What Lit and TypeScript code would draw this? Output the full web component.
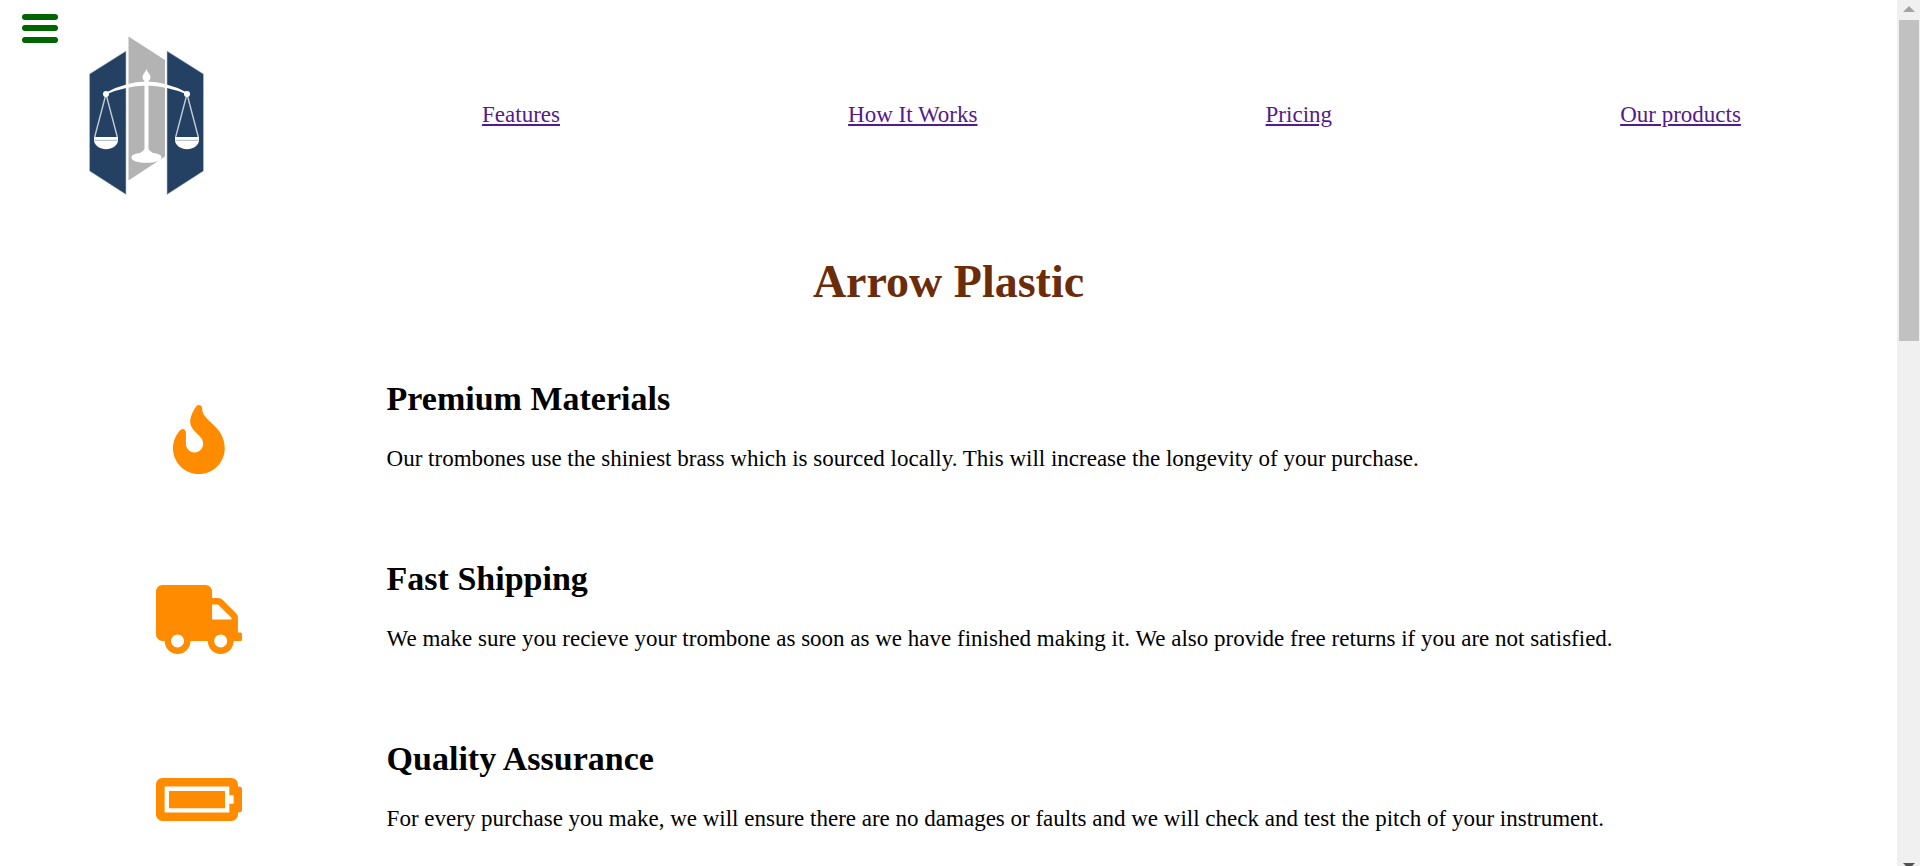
import { LitElement, html, css, svg } from "lit";
import { customElement } from "lit/decorators.js";

interface Feature {
  title: string;
  text: string;
  viewBox: string;
  path: string;
}

const LINKS = [
  { label: "Features", href: "#features" },
  { label: "How It Works", href: "#how-it-works" },
  { label: "Pricing", href: "#pricing" },
  { label: "Our products", href: "#products" },
];

const FEATURES: Feature[] = [
  {
    title: "Premium Materials",
    text: "Our trombones use the shiniest brass which is sourced locally. This will increase the longevity of your purchase.",
    viewBox: "0 0 384 512",
    path: "M216 23.86c0-23.8-30.65-32.77-44.15-13.04C48 191.85 224 200 224 288c0 35.63-29.11 64.46-64.85 63.99-35.17-.45-63.15-29.77-63.15-64.94v-85.51c0-21.7-26.47-32.23-41.43-16.5C27.8 213.16 0 261.33 0 320c0 105.87 86.13 192 192 192s192-86.13 192-192c0-170.29-168-193-168-296.14z",
  },
  {
    title: "Fast Shipping",
    text: "We make sure you recieve your trombone as soon as we have finished making it. We also provide free returns if you are not satisfied.",
    viewBox: "0 0 640 512",
    path: "M624 352h-16V243.9c0-12.7-5.1-24.9-14.1-33.9L494 110.1c-9-9-21.2-14.1-33.9-14.1H416V48c0-26.5-21.5-48-48-48H48C21.5 0 0 21.5 0 48v320c0 26.5 21.5 48 48 48h16c0 53 43 96 96 96s96-43 96-96h128c0 53 43 96 96 96s96-43 96-96h48c8.8 0 16-7.2 16-16v-32c0-8.8-7.2-16-16-16zM160 464c-26.5 0-48-21.5-48-48s21.5-48 48-48 48 21.5 48 48-21.5 48-48 48zm320 0c-26.5 0-48-21.5-48-48s21.5-48 48-48 48 21.5 48 48-21.5 48-48 48zm80-208H416V144h44.1l99.9 99.9V256z",
  },
  {
    title: "Quality Assurance",
    text: "For every purchase you make, we will ensure there are no damages or faults and we will check and test the pitch of your instrument.",
    viewBox: "0 0 640 512",
    path: "M544 160v64h32v64h-32v64H64V160h480m16-64H48c-26.51 0-48 21.49-48 48v224c0 26.51 21.49 48 48 48h512c26.51 0 48-21.49 48-48v-16h8c13.255 0 24-10.745 24-24V184c0-13.255-10.745-24-24-24h-8v-16c0-26.51-21.49-48-48-48zm-48 96H96v128h416V192z",
  },
];

// One side of the balance: the pivot, its two cords and the pan.
const pan = (x: number) => svg`
  <path d="M${x} 94 L${x - 11.3} 137 M${x} 94 L${x + 11.3} 137" fill="none" stroke="#c3ccd6" stroke-width="1.4" />
  <circle cx=${x} cy="94" r="3" fill="#fff" />
  <path d="M${x - 12} 137 H${x + 12} V140 C${x + 12} 145.500 ${x + 6} 149.200 ${x} 149.200 S${x - 12} 145.500 ${x - 12} 140 Z" fill="#fff" />
  <path d="M${x - 11.5} 140.300 H${x + 11.5}" stroke="#a9b6c6" stroke-width="1" />
`;

@customElement("app-root")
export class AppRoot extends LitElement {
  static styles = css`
    :host {
      display: flex;
      height: 100vh;
      overflow: hidden;
      background: #fff;
      color: #000;
      font: 23px/27px "Liberation Serif", "Times New Roman", serif;
    }
    .page {
      position: relative;
      flex: 1;
      min-width: 0;
      overflow-y: auto;
      scrollbar-width: none;
    }
    .menu {
      position: absolute;
      top: 14px;
      left: 22px;
      padding: 0;
      border: 0;
      background: none;
      cursor: pointer;
    }
    .menu svg,
    .logo svg,
    .icon svg {
      display: block;
    }
    .header {
      display: flex;
      align-items: center;
      padding: 33px 12px 35px;
    }
    .logo {
      box-sizing: border-box;
      flex: 0 0 326px;
      padding-left: 76px;
    }
    .nav {
      flex: 1;
      display: flex;
      justify-content: space-around;
      margin: 0;
      padding: 0;
      list-style: none;
    }
    .nav a {
      color: #551a8b;
    }
    .title {
      margin: 25px 0 41px;
      color: #6b2c0a;
      font-size: 46px;
      line-height: 53px;
      text-align: center;
    }
    .feature {
      display: grid;
      grid-template-columns: 1fr 4fr;
      padding: 0 12px;
    }
    .icon {
      display: flex;
      align-items: center;
      justify-content: center;
      color: #ff8c00;
    }
    .icon svg {
      height: 69px;
      fill: currentColor;
    }
    .copy {
      padding: 30px 0 57px;
    }
    .copy h2 {
      margin: 0 0 26px;
      font-size: 34px;
      line-height: 40px;
    }
    .copy p {
      margin: 0;
    }
    .scrollbar {
      flex: 0 0 23px;
      box-sizing: border-box;
      display: flex;
      flex-direction: column;
      height: calc(100vh + 11px);
      padding: 0 1px 0 2px;
      background: #f0f0f0;
    }
    .scrollbar svg {
      display: block;
      flex: none;
      width: 20px;
      height: 20px;
    }
    .track {
      flex: 1;
    }
    .thumb {
      height: 38.4%;
      background: #c1c1c1;
    }
  `;

  render() {
    return html`
      <main class="page">
        <header class="header">
          <a class="logo" href="#top" aria-label="Arrow Plastic home">
            <svg width="117" height="162" viewBox="88 33 117 162">
              <g fill="#244063" stroke="#b9c3cf" stroke-width=".6">
                <path d="M89.500 74 L126 51 V194.500 L89.500 171 Z" />
                <path d="M167 51 L203.500 74 V171 L167 194.500 Z" />
              </g>
              <path d="M128.500 36.500 L165 60 V156.500 L128.500 180.500 Z" fill="#b3b3b3" />
              <path d="M106 92.500 Q126 82 146.500 81.600 Q167 82 187 92.500 V94.500 Q167 86 146.500 85.600 Q126 86 106 94.500 Z" fill="#fff" />
              <path d="M146.500 68.500 C147 72 150.500 74 150.500 77 C150.500 79 149.500 80 148.500 81 V149 Q149.500 151 153 153 C158 153.500 161.500 155 161.500 157.500 C161.500 161 155 162.800 146.500 162.800 S131.500 161 131.500 157.500 C131.500 155 135 153.500 140 153 Q143.500 151 144.500 149 V81 C143.500 80 142.500 79 142.500 77 C142.500 74 146 72 146.500 68.500 Z" fill="#fff" />
              ${pan(106)}${pan(187)}
            </svg>
          </a>
          <ul class="nav">
            ${LINKS.map((l) => html`<li><a href=${l.href}>${l.label}</a></li>`)}
          </ul>
        </header>
        <button class="menu" aria-label="Open menu">
          <svg width="36" height="29" viewBox="0 0 36 29" fill="#006400">
            <rect width="36" height="6" rx="3" />
            <rect y="11" width="36" height="6" rx="3" />
            <rect y="23" width="36" height="6" rx="3" />
          </svg>
        </button>
        <h1 class="title">Arrow Plastic</h1>
        ${FEATURES.map(
          (f) => html`
            <section class="feature">
              <div class="icon">
                <svg viewBox=${f.viewBox} aria-hidden="true"><path d=${f.path} /></svg>
              </div>
              <div class="copy">
                <h2>${f.title}</h2>
                <p>${f.text}</p>
              </div>
            </section>
          `
        )}
      </main>
      <div class="scrollbar" aria-hidden="true">
        <svg viewBox="0 0 20 20"><path d="M4 12 L10 6 L16 12 Z" fill="#a3a3a3" /></svg>
        <div class="track"><div class="thumb"></div></div>
        <svg viewBox="0 0 20 20"><path d="M4 6 H16 L10 12 Z" fill="#505050" /></svg>
      </div>
    `;
  }
}
